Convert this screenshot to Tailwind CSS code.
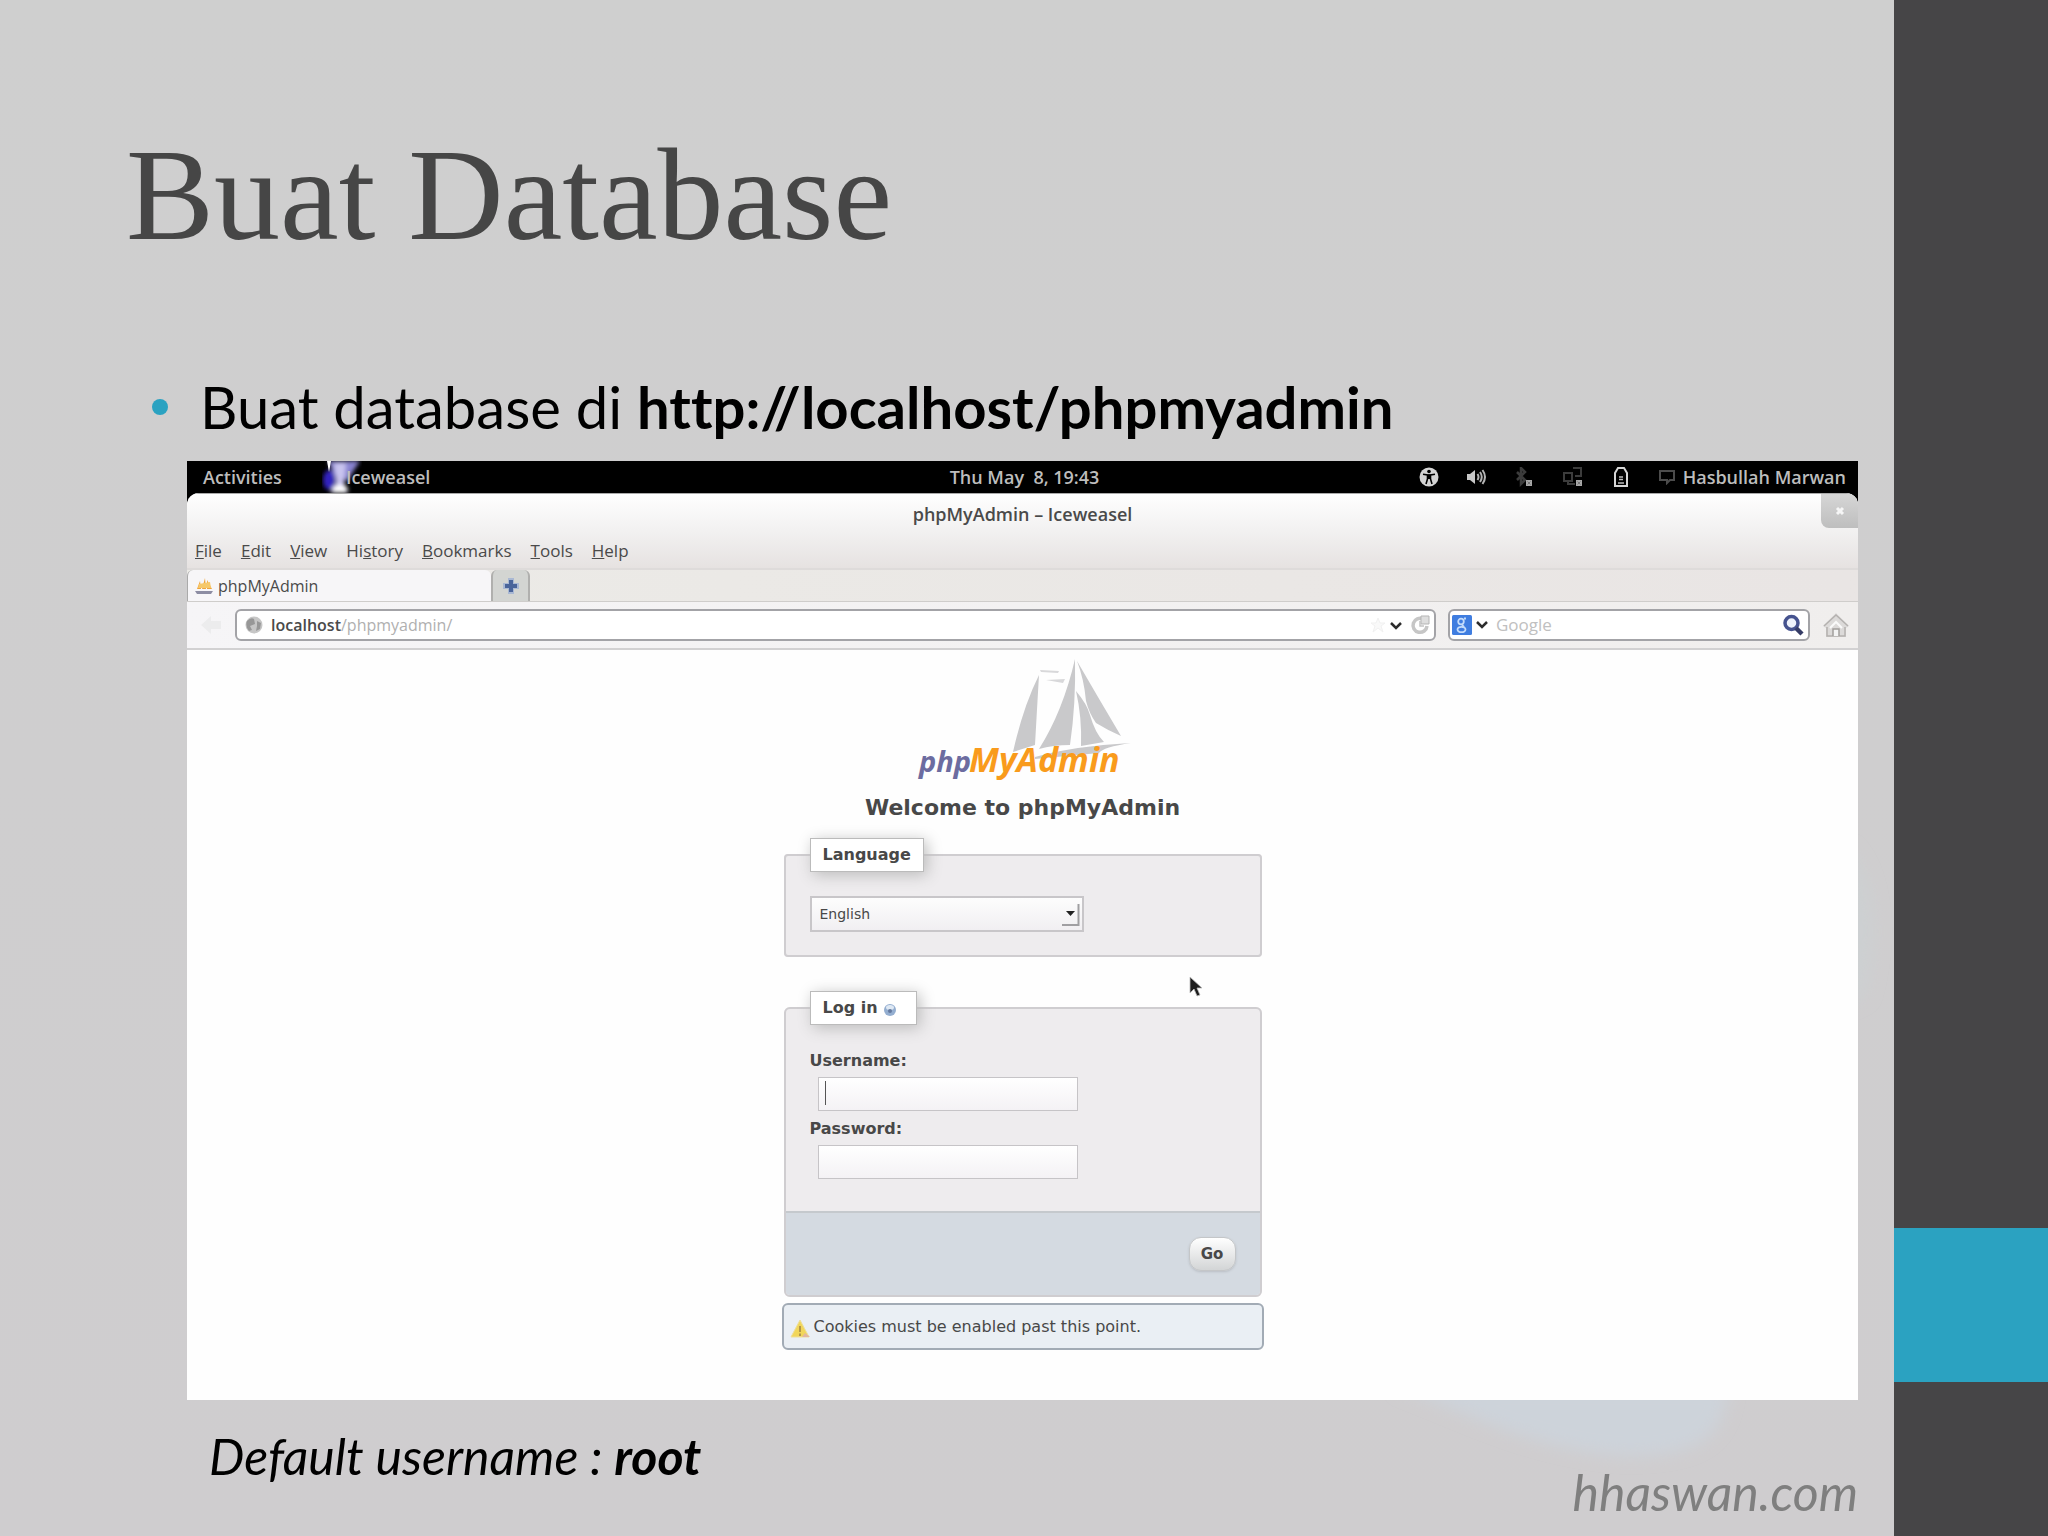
<!DOCTYPE html>
<html lang="id">
<head>
  <meta charset="UTF-8">
  <meta name="viewport" content="width=device-width, initial-scale=1.0">
  <title>Buat Database</title>
  <script src="https://cdn.jsdelivr.net/npm/@tailwindcss/browser@4"></script>
</head>
<body class="flex min-h-screen bg-[#cfcfcf] font-['Lato',sans-serif] text-black">

  <main class="relative flex min-w-0 flex-1 flex-col bg-linear-to-b from-[#cfcfcf] to-[#cfcdcf] pr-9 overflow-hidden">
    <!-- background swirl -->
    <svg class="absolute right-0 bottom-0 h-[720px] w-[600px]" viewBox="0 0 600 720" aria-hidden="true">
      <defs>
        <filter id="soft"><feGaussianBlur stdDeviation="8"/></filter>
      </defs>
      <g filter="url(#soft)">
        <path d="M100 570 C180 600 240 634 330 640 C400 640 430 625 435 570 Z" fill="#cdd3da"/>
        <path d="M550 30 C585 60 585 130 570 180 L550 190 Z" fill="#cdd0d2"/>
      </g>
    </svg>

    <h1 class="pt-[115px] pl-[126px] font-['Liberation_Serif',serif] text-[132px] leading-[160px] text-[#464646]">Buat Database</h1>

    <ul class="relative pt-[96px] pl-[152px]">
      <li class="flex items-center gap-8 text-[58px] leading-[72px] [font-variant-ligatures:none]">
        <span class="size-4 rounded-full bg-[#2ba2c1]"></span>
        <span>Buat database di <strong>http://localhost/phpmyadmin</strong></span>
      </li>
    </ul>

    <!-- desktop -->
    <section class="relative mt-[18px] ml-[187px] flex flex-col bg-black font-['Open_Sans',sans-serif] text-[16px] text-[#4a4a4a]">
      <header class="flex h-8 items-center pr-3 pl-4 text-[18px] leading-8 font-semibold text-[#bdbdbd]">
        <div class="flex flex-1 items-center gap-10">
          <span>Activities</span>
          <span class="flex items-center">
            <svg class="h-8 w-10" viewBox="0 0 40 32" aria-hidden="true">
              <defs>
                <filter id="glow"><feGaussianBlur stdDeviation="2"/></filter>
              </defs>
              <g filter="url(#glow)">
                <ellipse cx="7" cy="19" rx="6" ry="10" fill="#3320c0"/>
                <path d="M6 0 H38 L30 12 L26 20 L12 14 Z" fill="#8a84d2"/>
                <path d="M12 2 L24 2 L22 22 L26 32 H8 L14 22 Z" fill="#c9c4ef"/>
                <ellipse cx="18" cy="28" rx="8" ry="4" fill="#fff"/>
              </g>
              <path d="M5 0 H9 L7 11 Z" fill="#fff"/>
            </svg>
            <span class="-ml-4">Iceweasel</span>
          </span>
        </div>
        <span class="whitespace-pre">Thu May  8, 19:43</span>
        <div class="flex flex-1 items-center justify-end gap-7">
          <svg class="size-5" viewBox="0 0 20 20" aria-label="Accessibility">
            <circle cx="10" cy="10" r="9.5" fill="#d4d4d4"/>
            <circle cx="10" cy="4.5" r="1.8" fill="#000"/>
            <path d="M4 7.2 L8.5 8 V12 L7 17 M16 7.2 L11.5 8 V12 L13 17 M8.5 8 H11.5" fill="none" stroke="#000" stroke-width="1.6"/>
            <path d="M8.5 7.5 H11.5 V12 H8.5 Z" fill="#000"/>
          </svg>
          <svg class="size-5" viewBox="0 0 20 20" aria-label="Volume">
            <path d="M0 7 H3 L8 3 V17 L3 13 H0 Z" fill="#c8c8c8"/>
            <path d="M10.5 7 Q12.5 10 10.5 13 M13 5 Q16.5 10 13 15 M15.5 3 Q20.5 10 15.5 17" fill="none" stroke="#b4b4b4" stroke-width="2"/>
          </svg>
          <svg class="size-5" viewBox="0 0 20 20" aria-label="Bluetooth">
            <path d="M2 5 L10 13 L6 17 V1 L10 5 L2 13" fill="none" stroke="#3c3c3c" stroke-width="2.5"/>
            <path d="M11 13 H17 V19 H11 Z" fill="#a8a8a8"/>
            <path d="M12.5 14.5 L15.5 17.5 M15.5 14.5 L12.5 17.5" stroke="#777"/>
          </svg>
          <svg class="size-5" viewBox="0 0 20 20" aria-label="Network">
            <path d="M1 6 H9 V14 H1 Z M10 1 H18 V9 H12 M5 14 V17 H12" fill="none" stroke="#3c3c3c" stroke-width="2"/>
            <path d="M13 13 H19 V19 H13 Z" fill="#a8a8a8"/>
            <path d="M14.5 14.5 L17.5 17.5 M17.5 14.5 L14.5 17.5" stroke="#777"/>
          </svg>
          <svg class="size-5" viewBox="0 0 20 20" aria-label="Battery">
            <path d="M4 6 L7 1 H13 L16 6 V19 H4 Z" fill="none" stroke="#d6d6d6" stroke-width="2"/>
            <path d="M8 10 H12 M8 12.5 H12 M7 16 H13" stroke="#bbb" stroke-width="1.5"/>
          </svg>
          <span class="flex items-center gap-2">
            <svg class="h-4 w-4" viewBox="0 0 16 16" aria-hidden="true">
              <path d="M1 2 H15 V11 H11 L8 14 V11 H1 Z" fill="none" stroke="#4c4c4c" stroke-width="2"/>
            </svg>
            Hasbullah Marwan
          </span>
        </div>
      </header>

      <!-- browser window -->
      <div class="flex flex-col overflow-hidden rounded-t-xl bg-[#e8e5e4]">
        <div class="bg-linear-to-b from-white via-[#f2f1f1] to-[#e6e2e1]">
          <div class="flex h-10 items-start border-t border-[#aaa]">
            <span class="w-[37px]"></span>
            <h2 class="flex-1 text-center text-[18px] leading-10 font-semibold">phpMyAdmin – Iceweasel</h2>
            <button class="flex h-[34px] w-[37px] items-center justify-center rounded-bl-lg bg-linear-to-b from-[#d6d6d6] to-[#bebebe]" aria-label="Close">
              <svg class="size-3" viewBox="0 0 12 12" aria-hidden="true"><path d="M3 3 L9 9 M9 3 L3 9" stroke="#f6f6f6" stroke-width="3"/></svg>
            </button>
          </div>
          <nav class="flex h-[35px] items-center gap-[19px] pl-2 text-[17px] font-medium">
            <a href="#"><u>F</u>ile</a>
            <a href="#"><u>E</u>dit</a>
            <a href="#"><u>V</u>iew</a>
            <a href="#">Hi<u>s</u>tory</a>
            <a href="#"><u>B</u>ookmarks</a>
            <a href="#"><u>T</u>ools</a>
            <a href="#"><u>H</u>elp</a>
          </nav>
        </div>

        <div class="flex h-[34px] items-end border-t-2 border-b border-t-[#dedbda] border-b-[#cfcdcb] bg-linear-to-r from-[#ecebe7] to-[#e9e5e4]">
          <a href="#" class="flex h-[31px] w-[304px] items-center gap-1 rounded-t-md border-l border-[#aaa] bg-[#f7f6f8] pl-[6px] font-medium">
            <svg class="size-5" viewBox="0 0 20 20" aria-hidden="true">
              <path d="M3 13 L6 5 L7 13 Z M8 13 L11 2 L12 13 Z M13 13 V4 L18 13 Z" fill="#f0a43a"/>
              <path d="M5 8 L16 6 L17 12 H4 Z" fill="#f6c86a"/>
              <path d="M1 15 H19 L17 18 H3 Z" fill="#8d8da3"/>
            </svg>
            phpMyAdmin
          </a>
          <button class="flex h-[31px] w-[39px] items-center justify-center rounded-t-md border-x-2 border-[#b0b0ae] bg-[#d3d5d2]" aria-label="New tab">
            <svg class="size-[18px]" viewBox="0 0 18 18" aria-hidden="true">
              <path d="M6 1 H12 V6 H17 V12 H12 V17 H6 V12 H1 V6 H6 Z" fill="#a9b8d3"/>
              <path d="M7 3 H11 V7 H15 V11 H11 V15 H7 V11 H3 V7 H7 Z" fill="#4a659b"/>
            </svg>
          </button>
        </div>

        <div class="flex h-12 items-center gap-3 border-b-2 border-[#d2d1d2] bg-linear-to-r from-[#f6f5f7] to-[#f0eeed] pr-2 pl-3">
          <svg class="size-6" viewBox="0 0 24 24" aria-hidden="true">
            <path d="M2 12 L12 3 V8 H22 V16 H12 V21 Z" fill="#ececed"/>
          </svg>
          <div class="flex h-8 flex-1 items-center gap-2 rounded-md border-2 border-[#a3a3a7] bg-white pr-1 pl-2">
            <svg class="size-[18px]" viewBox="0 0 18 18" aria-hidden="true">
              <circle cx="9" cy="9" r="8.5" fill="#c6c6c6"/>
              <path d="M2 5 Q6 1 9 3 L10 8 L5 10 L7 14 L4 15 Q0 10 2 5 Z M12 5 L16 7 L15 13 L11 15 L12 10 Z" fill="#979797"/>
            </svg>
            <a href="#" class="flex-1 font-semibold">localhost<span class="font-normal text-[#b0b0b0]">/phpmyadmin/</span></a>
            <svg class="size-4" viewBox="0 0 16 16" aria-hidden="true">
              <path d="M8 1 L10 6 H15 L11 9 L13 15 L8 11 L3 15 L5 9 L1 6 H6 Z" fill="#f9f9f9" stroke="#f1f1f1"/>
            </svg>
            <svg class="-ml-1 h-4 w-3" viewBox="0 0 12 16" aria-hidden="true"><path d="M1 6 L6 11 L11 6" fill="none" stroke="#2c2c2c" stroke-width="2.5"/></svg>
            <button aria-label="Reload">
              <svg class="size-5" viewBox="0 0 20 20" aria-hidden="true">
                <path d="M17 11 A7 7 0 1 1 13 4" fill="none" stroke="#c6c6c6" stroke-width="3.5"/>
                <path d="M11 1 H19 V9 H11 Z" fill="#dedede" stroke="#b5b5b5"/>
                <path d="M10 6 V11 H14" fill="none" stroke="#c4c4c4" stroke-width="1.5"/>
              </svg>
            </button>
          </div>
          <div class="flex h-8 w-[362px] items-center gap-1 rounded-md border-2 border-[#a3a3a7] bg-white pr-1 pl-[2px]">
            <svg class="size-5" viewBox="0 0 20 20" aria-hidden="true">
              <rect width="20" height="20" rx="1.5" fill="#3f7de0"/>
              <circle cx="9" cy="6.5" r="2.8" fill="none" stroke="#c4dcfb" stroke-width="1.8"/>
              <path d="M12 3.5 H14 M10 10 L12 12" stroke="#c4dcfb" stroke-width="1.8"/>
              <ellipse cx="9.5" cy="14.5" rx="4" ry="2.7" fill="none" stroke="#c4dcfb" stroke-width="1.8"/>
            </svg>
            <svg class="h-4 w-3" viewBox="0 0 12 16" aria-hidden="true"><path d="M1 5 L6 10 L11 5" fill="none" stroke="#2c2c2c" stroke-width="2.5"/></svg>
            <input type="text" placeholder="Google" aria-label="Google" class="min-w-0 flex-1 pl-1 text-[17px] placeholder:text-[#c0c0c0]">
            <button aria-label="Search">
              <svg class="size-[22px]" viewBox="0 0 22 22" aria-hidden="true">
                <circle cx="9.5" cy="9" r="6.5" fill="#eef2fb" stroke="#46538f" stroke-width="3.5"/>
                <path d="M14 14 L20 20" stroke="#353c66" stroke-width="4.5"/>
              </svg>
            </button>
          </div>
          <a href="#" aria-label="Home">
            <svg class="size-7" viewBox="0 0 28 28" aria-hidden="true">
              <path d="M1 15 L14 2 L27 15 L24 17 V26 H4 V17 Z" fill="#dcdad9"/>
              <path d="M2 15 L14 4 L26 15 M5 16 V25 H23 V16" fill="none" stroke="#b4b1af" stroke-width="1.5"/>
              <path d="M8 17 L14 11 L20 17" fill="none" stroke="#fafafa" stroke-width="2"/>
              <path d="M11 25 V18 H17 V25" fill="#f3f3f3" stroke="#a19e9c" stroke-width="1.5"/>
            </svg>
          </a>
        </div>
      </div>

      <!-- phpMyAdmin login -->
      <div class="relative flex flex-col items-center bg-[#fefefe] pb-[50px] font-['DejaVu_Sans',sans-serif] text-[#484848]">
        <svg class="mt-1 h-[130px] w-[220px]" viewBox="140 5 220 130" role="img" aria-label="phpMyAdmin">
          <g fill="#c9c9cb">
            <path d="M266 26 Q264 60 262 96 L240 103 Q250 58 266 26 Z"/>
            <path d="M302 10 Q303 55 297 96 Q280 96 266 100 Q290 62 302 10 Z"/>
            <path d="M303 42 Q314 55 317 66 Q322 84 331 93 L308 97 Q309 68 303 42 Z"/>
            <path d="M304 12 Q326 50 348 87 Q336 82 323 74 Q316 64 313 52 Q311 30 304 12 Z"/>
            <path d="M262 108 Q300 97 358 94 Q330 98 326 104 L262 110 Z"/>
            <path d="M267 21 L286 22 L285 24 L268 23 Z M273 31 L292 30 L290 34 Z" fill="#d8d8da"/>
          </g>
          <text x="146" y="123" font-family="Open Sans, sans-serif" font-size="29" font-style="italic" font-weight="700" fill="#6c6ca0">php</text>
          <text x="196" y="123" font-family="Open Sans, sans-serif" font-size="34" font-style="italic" font-weight="700" fill="#f99b1c">MyAdmin</text>
        </svg>
        <h3 class="pt-2 text-[22px] leading-8 font-bold">Welcome to phpMyAdmin</h3>

        <form class="flex w-[482px] flex-col text-[14px]">
          <fieldset class="mx-[2px] mt-[14px] rounded-sm border-2 border-[#cfcdd0] bg-[#eeecee] pb-[23px] pl-6">
            <legend class="border border-[#bbb] bg-white px-3 text-[16px] leading-8 font-bold shadow-[3px_3px_15px_#bbb]">Language</legend>
            <div class="relative mt-6 w-[274px]">
              <select aria-label="Language" class="block h-9 w-full appearance-none border-2 border-[#c8c6c9] bg-linear-to-b from-[#fdfdfd] to-[#f1eff2] px-2">
                <option>English</option>
              </select>
              <svg class="pointer-events-none absolute right-1 top-2 h-[22px] w-[18px]" viewBox="0 0 18 22" aria-hidden="true">
                <path d="M16.5 0 V21 H0" fill="none" stroke="#a09fa2" stroke-width="2"/>
                <path d="M4 7 H13 L8.5 12 Z" fill="#222"/>
              </svg>
            </div>
          </fieldset>

          <fieldset class="mx-[2px] mt-[34px] rounded-md border-2 border-[#cfcdd0] bg-[#eeecee]">
            <legend class="ml-6 border border-[#bbb] bg-white px-3 text-[16px] leading-8 font-bold shadow-[3px_3px_15px_#bbb]">
              <span class="flex items-center gap-[6px] pr-2">Log in
                <svg class="mt-1 size-3" viewBox="0 0 12 12" aria-hidden="true">
                  <circle cx="6" cy="6" r="6" fill="#94aed0"/>
                  <ellipse cx="6" cy="3.5" rx="4" ry="2.5" fill="#dfe9f4"/>
                  <circle cx="6" cy="7" r="2" fill="#64799f"/>
                </svg>
              </span>
            </legend>
            <div class="flex flex-col pt-6 pb-8 pl-6 text-[16px] font-bold">
              <label for="username" class="leading-6">Username:</label>
              <div class="relative mt-1 ml-2 w-[260px]">
                <input id="username" type="text" class="block h-[34px] w-full border border-[#c6c4c7] bg-linear-to-b from-white to-[#f4f2f5] px-2">
                <span class="absolute top-1 left-[7px] h-6 w-px bg-[#555]"></span>
              </div>
              <label for="password" class="mt-[6px] leading-6">Password:</label>
              <input id="password" type="password" class="mt-1 ml-2 h-[34px] w-[260px] border border-[#c6c4c7] bg-linear-to-b from-white to-[#f4f2f5] px-2">
            </div>
            <div class="flex justify-end rounded-b-sm border-t-2 border-[#c5c9cd] bg-[#d4dae1] px-6 py-6">
              <button type="submit" class="h-[34px] w-[47px] rounded-xl border border-[#c4c6c8] bg-linear-to-b from-white to-[#d3d5d6] text-[15px] font-bold shadow-sm">Go</button>
            </div>
          </fieldset>

          <p class="mt-[6px] flex h-[47px] items-center gap-1 rounded-md border-2 border-[#a2abb5] bg-[#eaeff4] pl-[6px] text-[16px]">
            <svg class="mt-1 size-5" viewBox="0 0 20 20" aria-hidden="true">
              <path d="M10 1 L19 18 H1 Z" fill="#f1d65a" stroke="#eedf9a"/>
              <path d="M10 7 V13 M10 14.5 V17" stroke="#b2964a" stroke-width="2"/>
              <path d="M12 18 L20 18 L15 14 Z" fill="#e2b7a0"/>
            </svg>
            Cookies must be enabled past this point.
          </p>
        </form>

        <!-- mouse pointer -->
        <svg class="absolute top-[326px] left-[calc(50%+166px)] h-[22px] w-[14px]" viewBox="0 0 14 22" aria-hidden="true">
          <path d="M1 1 V17 L5 13 L8 20 L11 19 L8 12 H13 Z" fill="#1c1c1c" stroke="#bbb" stroke-width="0.8"/>
        </svg>
      </div>
    </section>

    <footer class="relative flex items-start justify-between pl-[209px] text-[50px] leading-[56px] italic">
      <p class="pt-7">Default username : <strong>root</strong></p>
      <p class="pt-16 text-[#7f7f7f]">hhaswan.com</p>
    </footer>
  </main>

  <!-- side stripe -->
  <aside class="flex w-[154px] shrink-0 flex-col bg-[#464547]">
    <div class="flex-1"></div>
    <div class="h-[154px] bg-[#2ba2c1]"></div>
    <div class="h-[154px]"></div>
  </aside>

</body>
</html>
